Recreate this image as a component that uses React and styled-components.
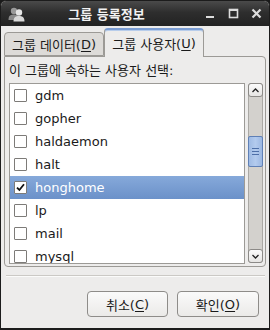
import React from "react";
import styled, { createGlobalStyle } from "styled-components";

const Global = createGlobalStyle`
  html, body { margin: 0; padding: 0; background: #1a1a1a; }
  body { font-family: "DejaVu Sans", "Noto Sans CJK KR", sans-serif; font-size: 13px; }
  * { box-sizing: border-box; }
`;

const Window = styled.div`
  width: 270px;
  height: 330px;
  display: flex;
  flex-direction: column;
  background: #edeceb;
  border: 1px solid #1c1c1c;
  border-bottom-width: 2px;
  border-radius: 6px 6px 0 0;
  overflow: hidden;
`;

const TitleBar = styled.div`
  height: 25px;
  flex: none;
  display: flex;
  align-items: center;
  padding: 0 6px 0 6px;
  background: linear-gradient(#4a4a4a, #2e2e2e 45%, #222 100%);
  color: #fff;
`;

const TitleIcon = styled.div`
  width: 18px;
  height: 18px;
  display: flex;
  align-items: center;
  justify-content: center;
`;

const Title = styled.div`
  flex: 1;
  text-align: center;
  font-weight: bold;
  font-size: 13px;
  padding-right: 38px;
  padding-left: 22px;
  color: #f2f2f2;
`;

const Controls = styled.div`
  display: flex;
  align-items: center;
  gap: 10px;
`;

const Ctrl = styled.svg`
  width: 13px;
  height: 13px;
`;

const Body = styled.div`
  flex: 1;
  display: flex;
  flex-direction: column;
  padding: 2px 2px 0 3px;
`;

const TabRow = styled.div`
  height: 28px;
  display: flex;
  align-items: flex-end;
  position: relative;
  z-index: 1;
`;

const Tab = styled.div`
  height: ${(p) => (p.$active ? 29 : 24)}px;
  width: ${(p) => p.$w}px;
  margin-bottom: ${(p) => (p.$active ? -1 : 0)}px;
  display: flex;
  align-items: center;
  justify-content: center;
  padding-top: ${(p) => (p.$active ? 0 : 1)}px;
  background: ${(p) => (p.$active ? "#edeceb" : "#dddbd8")};
  border: 1px solid #9c9a96;
  border-bottom: ${(p) => (p.$active ? "none" : "1px solid #9c9a96")};
  border-top: ${(p) => (p.$active ? "2px solid #7b9dd3" : "1px solid #9c9a96")};
  border-radius: 4px 4px 0 0;
  color: #1a1a1a;
  font-size: 13px;
  white-space: nowrap;
  box-shadow: ${(p) => (p.$active ? "inset 0 1px 0 #b8cdeb" : "none")};
`;

const U = styled.span`
  text-decoration: underline;
  text-underline-offset: 2px;
`;

const Panel = styled.div`
  width: 262px;
  height: 211px;
  border: 1px solid #9c9a96;
  border-radius: 0 4px 4px 4px;
  padding: 0 2px 2px 2px;
  display: flex;
  flex-direction: column;
`;

const Label = styled.div`
  height: 26px;
  display: flex;
  align-items: center;
  padding-left: 2px;
  padding-bottom: 1px;
  color: #1a1a1a;
  white-space: nowrap;
`;

const ListArea = styled.div`
  height: 181px;
  display: flex;
  gap: 3px;
  padding-left: 2px;
`;

const ListBox = styled.div`
  width: 238px;
  height: 181px;
  border: 1px solid #9c9a96;
  background: #fff;
  overflow: hidden;
`;

const Row = styled.div`
  height: 23px;
  display: flex;
  align-items: center;
  gap: 8px;
  padding-left: 4px;
  color: ${(p) => (p.$sel ? "#fff" : "#1a1a1a")};
  background: ${(p) =>
    p.$sel ? "linear-gradient(#86a9da, #6b91c9)" : "transparent"};
`;

const Check = styled.div`
  width: 13px;
  height: 13px;
  flex: none;
  border: 1px solid #7d7b78;
  border-radius: 1px;
  background: #fff;
  display: flex;
  align-items: center;
  justify-content: center;
`;

const Scrollbar = styled.div`
  width: 15px;
  height: 180px;
  display: flex;
  flex-direction: column;
  background: #d3d1cd;
  border: 1px solid #aaa8a4;
  border-radius: 3px;
`;

const ScrollBtn = styled.div`
  height: 14px;
  flex: none;
  margin: -1px;
  border: 1px solid #8c8a87;
  border-radius: 3px;
  background: linear-gradient(#fbfbfb, #e6e5e3);
  display: flex;
  align-items: center;
  justify-content: center;
`;

const Trough = styled.div`
  flex: 1;
  display: flex;
  flex-direction: column;
  padding-top: 40px;
`;

const Thumb = styled.div`
  height: 31px;
  margin: 0 -1px;
  border: 1px solid #5f80b6;
  border-radius: 2px;
  background: linear-gradient(90deg, #9fbbe4, #b3cbee 50%, #9cb8e2);
  display: flex;
  align-items: center;
  justify-content: center;
`;

const Separator = styled.div`
  margin: 8px 2px 0 2px;
  height: 2px;
  border-top: 1px solid #cbc9c5;
  border-bottom: 1px solid #fbfbfa;
`;

const Buttons = styled.div`
  display: flex;
  justify-content: flex-end;
  gap: 9px;
  padding-right: 8px;
  margin-top: 14px;
`;

const Button = styled.div`
  width: ${(p) => p.$w}px;
  height: 26px;
  border: 1px solid #8e8c89;
  border-radius: 4px;
  background: linear-gradient(#fafafa, #ebeae8);
  display: flex;
  align-items: center;
  justify-content: center;
  color: #1a1a1a;
  white-space: nowrap;
`;

const users = ["gdm", "gopher", "haldaemon", "halt", "honghome", "lp", "mail", "mysql"];

function CheckMark() {
  return (
    <svg width="9" height="9" viewBox="0 0 9 9">
      <path d="M1 4.6 L3.4 7 L8 1.2" fill="none" stroke="#111" strokeWidth="1.8" />
    </svg>
  );
}

export default function App() {
  return (
    <>
      <Global />
      <Window>
        <TitleBar>
          <TitleIcon>
            <svg width="17" height="16" viewBox="0 0 17 16">
              <circle cx="6" cy="5" r="3.2" fill="#9a9a9a" />
              <path d="M0.5 14 C0.5 9 3 8.5 6 8.5 C9 8.5 11 9 11 14 Z" fill="#8a8a8a" />
              <circle cx="11" cy="6.5" r="3.2" fill="#e6e6e6" />
              <path d="M5.5 15.5 C5.5 11 8 10 11 10 C14 10 16.5 11 16.5 15.5 Z" fill="#d9d9d9" />
            </svg>
          </TitleIcon>
          <Title>그룹 등록정보</Title>
          <Controls>
            <Ctrl viewBox="0 0 13 13">
              <rect x="2" y="9" width="8" height="2" fill="#ddd" />
            </Ctrl>
            <Ctrl viewBox="0 0 13 13">
              <rect x="2.5" y="2.5" width="8" height="8" fill="none" stroke="#ddd" strokeWidth="1.6" />
              <rect x="2.5" y="2.5" width="8" height="1.5" fill="#ddd" />
            </Ctrl>
            <Ctrl viewBox="0 0 13 13">
              <path d="M2.5 2.5 L10.5 10.5 M10.5 2.5 L2.5 10.5" stroke="#ddd" strokeWidth="2.2" />
            </Ctrl>
          </Controls>
        </TitleBar>
        <Body>
          <TabRow>
            <Tab $w={100}>
              그룹 데이터(<U>D</U>)
            </Tab>
            <Tab $w={100} $active>
              그룹 사용자(<U>U</U>)
            </Tab>
          </TabRow>
          <Panel>
            <Label>이 그룹에 속하는 사용자 선택:</Label>
            <ListArea>
              <ListBox>
                {users.map((u) => (
                  <Row key={u} $sel={u === "honghome"}>
                    <Check>{u === "honghome" && <CheckMark />}</Check>
                    {u}
                  </Row>
                ))}
              </ListBox>
              <Scrollbar>
                <ScrollBtn>
                  <svg width="7" height="5" viewBox="0 0 7 5">
                    <path d="M0.5 4 L3.5 1 L6.5 4" fill="none" stroke="#222" strokeWidth="1.3" />
                  </svg>
                </ScrollBtn>
                <Trough>
                  <Thumb>
                    <svg width="7" height="7" viewBox="0 0 7 7">
                      <path d="M0 0.5 H7 M0 3.5 H7 M0 6.5 H7" stroke="#4d6fa8" strokeWidth="1" />
                    </svg>
                  </Thumb>
                </Trough>
                <ScrollBtn>
                  <svg width="7" height="5" viewBox="0 0 7 5">
                    <path d="M0.5 1 L3.5 4 L6.5 1" fill="none" stroke="#222" strokeWidth="1.3" />
                  </svg>
                </ScrollBtn>
              </Scrollbar>
            </ListArea>
          </Panel>
          <Separator />
          <Buttons>
            <Button $w={81}>
              취소(<U>C</U>)
            </Button>
            <Button $w={82}>
              확인(<U>O</U>)
            </Button>
          </Buttons>
        </Body>
      </Window>
    </>
  );
}
